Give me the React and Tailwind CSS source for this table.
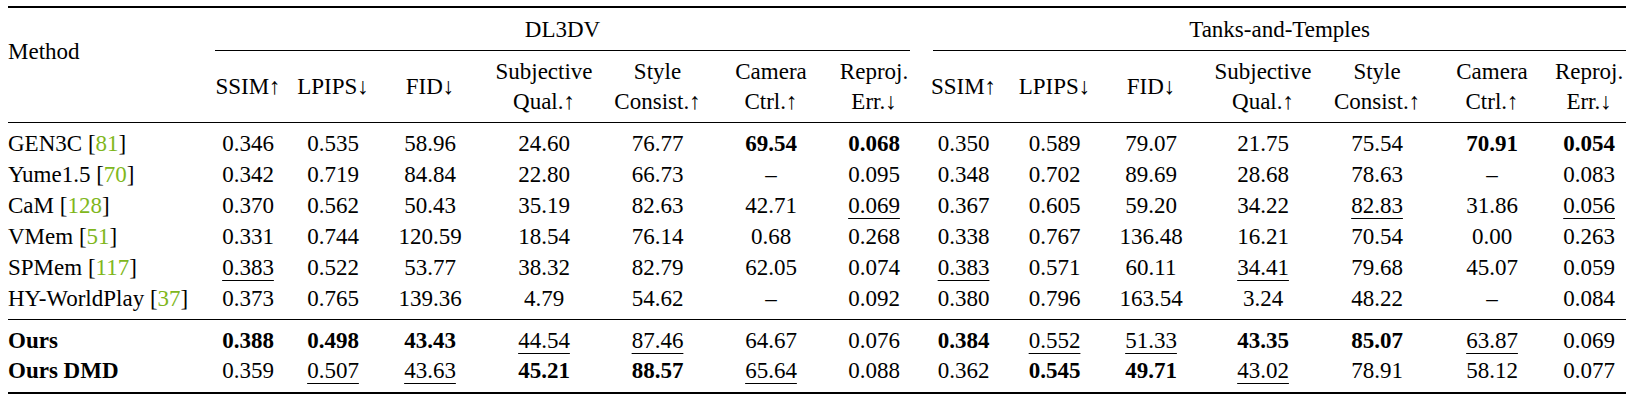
import React from "react";

const GREEN = "text-[#80b71c]";

const COLS = [
  "w-[199px]", "w-[82px]", "w-[88px]", "w-[106px]", "w-[122px]", "w-[105px]", "w-[122px]", "w-[84px]",
  "w-[95px]", "w-[87px]", "w-[106px]", "w-[118px]", "w-[110px]", "w-[120px]", "w-[74px]",
];

const METRICS = [
  ["SSIM↑"],
  ["LPIPS↓"],
  ["FID↓"],
  ["Subjective", "Qual.↑"],
  ["Style", "Consist.↑"],
  ["Camera", "Ctrl.↑"],
  ["Reproj.", "Err.↓"],
];

// "**" = best (bold), "__" = second best (underlined)
const ROWS = [
  { name: "GEN3C", cite: "81", vals: ["0.346", "0.535", "58.96", "24.60", "76.77", "**69.54", "**0.068", "0.350", "0.589", "79.07", "21.75", "75.54", "**70.91", "**0.054"] },
  { name: "Yume1.5", cite: "70", vals: ["0.342", "0.719", "84.84", "22.80", "66.73", "–", "0.095", "0.348", "0.702", "89.69", "28.68", "78.63", "–", "0.083"] },
  { name: "CaM", cite: "128", vals: ["0.370", "0.562", "50.43", "35.19", "82.63", "42.71", "__0.069", "0.367", "0.605", "59.20", "34.22", "__82.83", "31.86", "__0.056"] },
  { name: "VMem", cite: "51", vals: ["0.331", "0.744", "120.59", "18.54", "76.14", "0.68", "0.268", "0.338", "0.767", "136.48", "16.21", "70.54", "0.00", "0.263"] },
  { name: "SPMem", cite: "117", vals: ["__0.383", "0.522", "53.77", "38.32", "82.79", "62.05", "0.074", "__0.383", "0.571", "60.11", "__34.41", "79.68", "45.07", "0.059"] },
  { name: "HY-WorldPlay", cite: "37", vals: ["0.373", "0.765", "139.36", "4.79", "54.62", "–", "0.092", "0.380", "0.796", "163.54", "3.24", "48.22", "–", "0.084"] },
];

const OURS = [
  { name: "Ours", vals: ["**0.388", "**0.498", "**43.43", "__44.54", "__87.46", "64.67", "0.076", "**0.384", "__0.552", "__51.33", "**43.35", "**85.07", "__63.87", "0.069"] },
  { name: "Ours DMD", vals: ["0.359", "__0.507", "__43.63", "**45.21", "**88.57", "__65.64", "0.088", "0.362", "**0.545", "**49.71", "__43.02", "78.91", "58.12", "0.077"] },
];

function Value({ v }) {
  if (v.startsWith("**")) return <span className="font-bold">{v.slice(2)}</span>;
  if (v.startsWith("__"))
    return <span className="underline decoration-1 underline-offset-[5px]">{v.slice(2)}</span>;
  return <span>{v}</span>;
}

function BodyRow({ row, cellClass }) {
  return (
    <tr>
      <td className={`text-left ${cellClass}`}>
        {row.cite ? (
          <>
            {row.name} [<span className={GREEN}>{row.cite}</span>]
          </>
        ) : (
          <span className="font-bold">{row.name}</span>
        )}
      </td>
      {row.vals.map((v, i) => (
        <td key={i} className={`text-center ${cellClass}`}>
          <Value v={v} />
        </td>
      ))}
    </tr>
  );
}

export default function App() {
  return (
    <div className="min-h-screen bg-white pl-[8px] pt-[6px] font-['Liberation_Serif',serif] text-[23px] text-black">
      <table className="w-[1618px] table-fixed border-separate border-spacing-0 whitespace-nowrap">
        <colgroup>
          {COLS.map((c, i) => (
            <col key={i} className={c} />
          ))}
        </colgroup>
        <thead>
          <tr>
            <th
              rowSpan={2}
              className="border-t-2 border-b border-black pt-[28px] text-left align-top font-normal leading-[31px]"
            >
              Method
            </th>
            <th colSpan={7} className="border-t-2 border-black p-0 font-normal">
              <div className="mr-[6px] ml-[8px] border-b border-black pt-[6px] pb-[5px] leading-[31px]">DL3DV</div>
            </th>
            <th colSpan={7} className="border-t-2 border-black p-0 font-normal">
              <div className="ml-[17px] border-b border-black pt-[6px] pb-[5px] leading-[31px]">Tanks-and-Temples</div>
            </th>
          </tr>
          <tr>
            {[...METRICS, ...METRICS].map((m, i) => (
              <th
                key={i}
                className="border-b border-black pt-[6px] pb-[5px] text-center align-middle font-normal leading-[30px]"
              >
                {m.map((line) => (
                  <div key={line}>{line}</div>
                ))}
              </th>
            ))}
          </tr>
        </thead>
        <tbody>
          {ROWS.map((row, i) => (
            <BodyRow
              key={row.name}
              row={row}
              cellClass={`leading-[31px] ${i === 0 ? "pt-[5px]" : ""} ${
                i === ROWS.length - 1 ? "pb-[5px] border-b border-black" : ""
              }`}
            />
          ))}
          <BodyRow row={OURS[0]} cellClass="leading-[31px] pt-[5px]" />
          <BodyRow row={OURS[1]} cellClass="leading-[29px] pb-[7px] border-b-2 border-black" />
        </tbody>
      </table>
    </div>
  );
}
